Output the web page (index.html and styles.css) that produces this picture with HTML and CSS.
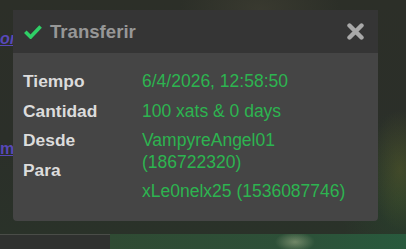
FILE: index.html
```html
<!DOCTYPE html>
<html lang="es">
<head>
<meta charset="utf-8">
<title>Transferir</title>
<link rel="stylesheet" href="styles.css">
</head>
<body>
<div class="page">
  <div class="backdrop">
    <span class="bg-link bg-link-1">on</span>
    <span class="bg-link bg-link-2">m</span>
    <div class="dialog">
      <div class="dialog-head">
        <svg class="icon-check" width="18" height="14" viewBox="0 0 18 14"><polyline points="1.3,6.8 6.6,12 16.6,1.6" fill="none" stroke="#2fcf66" stroke-width="3.6"/></svg>
        <span class="dialog-title">Transferir</span>
        <svg class="icon-close" width="17" height="17" viewBox="0 0 17 17"><path d="M2.5 2.5 L14.5 14.5 M14.5 2.5 L2.5 14.5" stroke="#a9a9a9" stroke-width="4.4" stroke-linecap="round"/></svg>
      </div>
      <div class="dialog-body">
        <div class="labels">
          <div class="label">Tiempo</div>
          <div class="label">Cantidad</div>
          <div class="label">Desde</div>
          <div class="label">Para</div>
        </div>
        <div class="values">
          <div class="value">6/4/2026, 12:58:50</div>
          <div class="value">100 xats &amp; 0 days</div>
          <div class="value">VampyreAngel01 (186722320)</div>
          <div class="value">xLe0nelx25 (1536087746)</div>
        </div>
      </div>
    </div>
  </div>
  <div class="bottom">
    <div class="bottom-box"></div>
    <div class="bottom-green"></div>
  </div>
</div>
</body>
</html>
```

FILE: styles.css
```css
html, body {
  margin: 0;
  padding: 0;
}
body {
  width: 406px;
  height: 249px;
  overflow: hidden;
  background: #2d4a36;
  font-family: "Liberation Sans", Arial, sans-serif;
}
.page {
  display: flex;
  flex-direction: column;
  height: 249px;
}
.backdrop {
  position: relative;
  height: 234px;
  flex: none;
  background:
    radial-gradient(ellipse 30px 60px at 400px 170px, rgba(110,105,40,0.35), transparent),
    radial-gradient(ellipse 60px 90px at 400px 200px, rgba(40,70,45,0.6), transparent),
    radial-gradient(ellipse 80px 50px at 260px 10px, rgba(70,68,55,0.5), transparent),
    linear-gradient(180deg, #2c2f28 0%, #2b2f29 60%, #2a3229 100%);
  padding: 10px 0 0 13px;
  box-sizing: border-box;
}
.bg-link {
  position: absolute;
  left: 0;
  color: #5848b8;
  font-weight: bold;
  font-style: italic;
  font-size: 16px;
  text-decoration: underline;
}
.bg-link-1 { top: 30px; }
.bg-link-2 { top: 140px; font-style: normal; }
.dialog {
  position: relative;
  width: 365px;
  border-radius: 0 0 4px 4px;
  overflow: hidden;
  background: #454545;
}
.dialog-head {
  height: 43px;
  background: #353535;
  display: flex;
  align-items: center;
  padding: 0 14px 0 11px;
}
.icon-check {
  flex: none;
}
.dialog-title {
  margin-left: 8px;
  font-size: 18.6px;
  font-weight: bold;
  color: #979797;
  flex: 1;
}
.icon-close {
  flex: none;
}
.dialog-body {
  display: flex;
  padding: 18px 10px 18px 10px;
}
.labels {
  width: 119px;
  flex: none;
  display: flex;
  flex-direction: column;
  gap: 8px;
}
.values {
  flex: 1;
  display: flex;
  flex-direction: column;
  gap: 8px;
}
.label {
  font-size: 17.4px;
  line-height: 21.5px;
  font-weight: bold;
  color: #dcdcdc;
}
.value {
  font-size: 17.5px;
  line-height: 21.5px;
  color: #2db450;
}
.bottom {
  flex: 1;
  display: flex;
}
.bottom-box {
  width: 110px;
  background: #2f312f;
  border-top: 1px solid #4a4d48;
}
.bottom-green {
  flex: 1;
  background:
    radial-gradient(ellipse 20px 10px at 185px 8px, rgba(180,190,150,0.5), transparent),
    linear-gradient(90deg, #2f4a33, #2d5038 60%, #285a3d);
}
```
